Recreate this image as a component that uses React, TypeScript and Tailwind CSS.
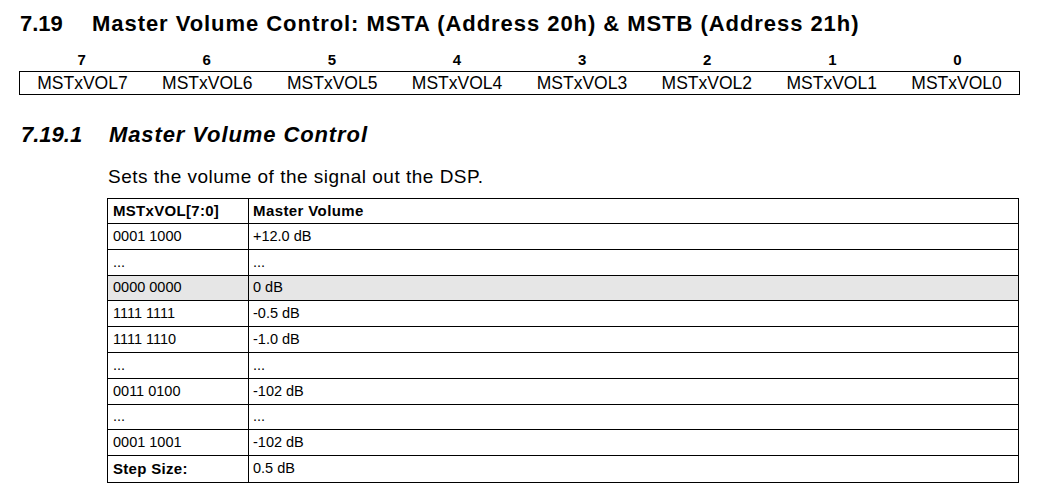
import React from "react";

const bits = [7, 6, 5, 4, 3, 2, 1, 0];

const rows: { a: string; b: string; h: string; boldA?: boolean; boldB?: boolean; hl?: boolean }[] = [
  { a: "MSTxVOL[7:0]", b: "Master Volume", h: "h-[25px]", boldA: true, boldB: true },
  { a: "0001 1000", b: "+12.0 dB", h: "h-[26px]" },
  { a: "...", b: "...", h: "h-[26px]" },
  { a: "0000 0000", b: "0 dB", h: "h-[25px]", hl: true },
  { a: "1111 1111", b: "-0.5 dB", h: "h-[26px]" },
  { a: "1111 1110", b: "-1.0 dB", h: "h-[26px]" },
  { a: "...", b: "...", h: "h-[26px]" },
  { a: "0011 0100", b: "-102 dB", h: "h-[26px]" },
  { a: "...", b: "...", h: "h-[25px]" },
  { a: "0001 1001", b: "-102 dB", h: "h-[26px]" },
  { a: "Step Size:", b: "0.5 dB", h: "h-[27px]", boldA: true },
];

export default function App() {
  return (
    <div className="w-[1046px] h-[502px] bg-white text-black font-['Liberation_Sans',Arial,sans-serif] overflow-hidden">
      <div className="pt-[12px] pl-[20px] flex text-[22px] leading-[24px] font-bold">
        <span className="w-[72px]">7.19</span>
        <span className="tracking-[0.95px]">Master Volume Control: MSTA (Address 20h) &amp; MSTB (Address 21h)</span>
      </div>
      <div className="mt-[15px] ml-[19px] w-[1001px] grid grid-cols-8 text-[15px] leading-[18px] font-bold">
        {bits.map((b) => (
          <div key={b} className="text-center">
            {b}
          </div>
        ))}
      </div>
      <div className="mt-[2px] ml-[19px] w-[1001px] h-[24px] border border-black grid grid-cols-8 text-[17.5px] leading-[22px]">
        {bits.map((b) => (
          <div key={b} className="text-center">
            MSTxVOL{b}
          </div>
        ))}
      </div>
      <div className="mt-[28px] pl-[21px] flex text-[22px] leading-[24px] font-bold italic">
        <span className="w-[88px]">7.19.1</span>
        <span className="tracking-[0.9px]">Master Volume Control</span>
      </div>
      <div className="mt-[19px] pl-[108px] text-[19px] leading-[21px] tracking-[0.5px]">
        Sets the volume of the signal out the DSP.
      </div>
      <div className="mt-[11px] ml-[107px] w-[912px] border-t border-l border-r border-black text-[14.5px]">
        {rows.map((r, i) => (
          <div
            key={i}
            className={`flex border-b border-black ${r.h} ${r.hl ? "bg-[#e6e6e6]" : ""}`}
          >
            <div
              className={`w-[141px] border-r border-black pl-[5px] flex items-center ${
                r.boldA ? "font-bold text-[15px] tracking-[0.3px]" : ""
              }`}
            >
              {r.a}
            </div>
            <div
              className={`flex-1 pl-[4px] flex items-center ${
                r.boldB ? "font-bold text-[15px] tracking-[0.4px]" : ""
              }`}
            >
              {r.b}
            </div>
          </div>
        ))}
      </div>
    </div>
  );
}
